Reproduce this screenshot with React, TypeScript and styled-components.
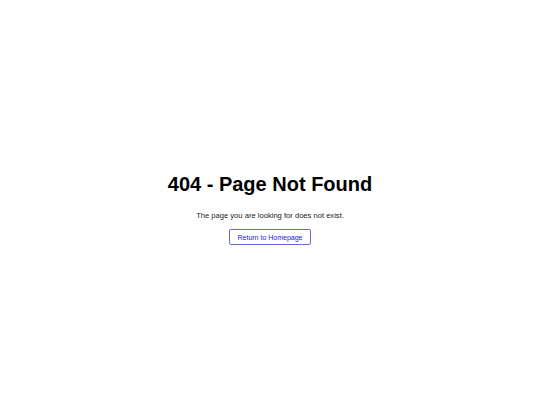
import { createGlobalStyle, styled } from "styled-components";

const GlobalStyle = createGlobalStyle`
  html, body {
    margin: 0;
    padding: 0;
    background: #fff;
  }
  body {
    font-family: "Liberation Sans", Arial, sans-serif;
  }
`;

const Page = styled.div`
  box-sizing: border-box;
  height: 405px;
  padding-top: 12px;
  display: flex;
  flex-direction: column;
  align-items: center;
  justify-content: center;
  text-align: center;
`;

const Title = styled.h1`
  margin: 0;
  font-size: 20px;
  font-weight: 700;
  color: #000;
`;

const Message = styled.p`
  margin: 15px 0 0;
  font-size: 7.6px;
  color: #222;
`;

const HomeButton = styled.a`
  margin-top: 9px;
  display: inline-block;
  padding: 4px 8px 3px;
  font-size: 7px;
  color: #2323d8;
  text-decoration: none;
  border: 1px solid #6b6bd8;
  border-radius: 2px;
  background: #fff;
`;

function App() {
  return (
    <>
      <GlobalStyle />
      <Page>
        <Title>404 - Page Not Found</Title>
        <Message>The page you are looking for does not exist.</Message>
        <HomeButton href="/">Return to Homepage</HomeButton>
      </Page>
    </>
  );
}

export default App;
